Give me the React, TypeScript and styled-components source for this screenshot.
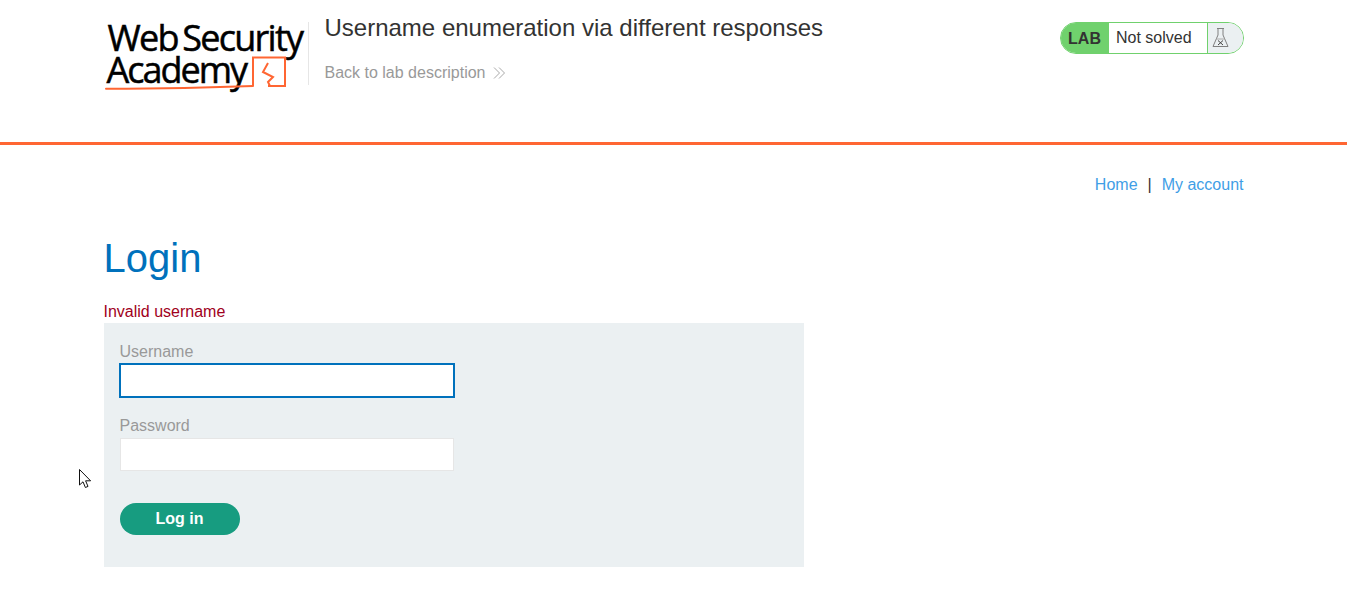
import React from "react";
import styled, { createGlobalStyle } from "styled-components";

const Global = createGlobalStyle`
  html, body { margin: 0; padding: 0; background: #fff; }
  body { font-family: "Liberation Sans", Arial, sans-serif; font-size: 16px; color: #333332; height: 590px; overflow: hidden; position: relative; }
`;

const Header = styled.header`
  height: 142px;
  border-bottom: 3px solid #ff6633;
  box-sizing: content-box;
`;
const Inner = styled.div`
  width: 1140px;
  margin: 0 auto;
`;
const HeaderInner = styled(Inner)`
  display: flex;
  align-items: flex-start;
  padding-top: 22px;
  box-sizing: content-box;
`;
const Logo = styled.div`
  position: relative;
  width: 204px;
  height: 63px;
  flex: none;
  color: #000;
  font-family: "Open Sans", sans-serif;
`;
const LogoLine = styled.div<{ $left: number; $spacing: number }>`
  margin-left: ${(p) => p.$left}px;
  font-size: 36px;
  line-height: 32px;
  letter-spacing: ${(p) => p.$spacing}px;
  word-spacing: -3px;
  white-space: nowrap;
  -webkit-text-stroke: 0.5px #000;
`;
const LogoArt = styled.svg`
  position: absolute;
  left: 0;
  top: 0;
`;
const Divider = styled.div`
  width: 1px;
  height: 63px;
  background: #e6e6e6;
  margin-right: 16px;
  flex: none;
`;
const TitleBlock = styled.div`
  flex: 1;
`;
const Title = styled.h2`
  margin: -1px 0 0;
  font-size: 24px;
  font-weight: 400;
  line-height: 13px;
  color: #333332;
`;
const BackLink = styled.a`
  display: flex;
  align-items: center;
  gap: 8px;
  margin-top: 30px;
  font-size: 16px;
  line-height: 18px;
  color: #999;
`;
const Badge = styled.div`
  display: flex;
  width: 184px;
  height: 32px;
  box-sizing: border-box;
  border: 1px solid #70d16d;
  border-radius: 16px;
  overflow: hidden;
  flex: none;
`;
const BadgeLab = styled.div`
  width: 48px;
  background: #70d16d;
  font-weight: 700;
  font-size: 16px;
  line-height: 31px;
  text-align: center;
  color: #333332;
`;
const BadgeStatus = styled.div`
  flex: 1;
  font-size: 16px;
  line-height: 29px;
  padding-left: 7.5px;
  color: #333332;
`;
const BadgeIcon = styled.div`
  width: 36px;
  background: #ebf0f2;
  border-left: 1px solid #70d16d;
  display: flex;
  align-items: center;
  padding-left: 4px;
  box-sizing: border-box;
`;
const Nav = styled.nav`
  display: flex;
  justify-content: flex-end;
  align-items: center;
  gap: 10px;
  padding-top: 31px;
  line-height: 18px;
`;
const NavLink = styled.a`
  color: #3f9ee6;
  font-size: 16px;
`;
const Sep = styled.span`
  color: #333332;
`;
const Heading = styled.h1`
  margin: 41px 0 0;
  font-size: 40px;
  font-weight: 400;
  line-height: 46px;
  color: #0071bc;
`;
const Error = styled.p`
  margin: 22px 0 2px;
  font-size: 16px;
  line-height: 18px;
  color: #a00020;
`;
const Form = styled.form`
  width: 700px;
  height: 244px;
  box-sizing: border-box;
  background: #ebf0f2;
  padding: 20px 16px 0;
`;
const Label = styled.label`
  display: block;
  font-size: 16px;
  line-height: 18px;
  color: #999;
`;
const Field = styled.input<{ $focus?: boolean }>`
  display: block;
  width: ${(p) => (p.$focus ? 336 : 334)}px;
  height: ${(p) => (p.$focus ? 35 : 33)}px;
  box-sizing: border-box;
  background: #fff;
  border: ${(p) => (p.$focus ? "2px solid #0071bc" : "1px solid #e6e6e6")};
  margin: ${(p) => (p.$focus ? "2px 0 19px -1px" : "3px 0 32px 0")};
  outline: none;
  padding: 0;
`;
const Submit = styled.button`
  display: block;
  width: 120px;
  height: 32px;
  border: 0;
  border-radius: 16px;
  background: #179c80;
  color: #fff;
  font-family: "Liberation Sans", Arial, sans-serif;
  font-weight: 700;
  font-size: 16px;
  padding: 0;
`;
const Cursor = styled.svg`
  position: absolute;
  left: 78px;
  top: 468px;
`;

export default function App() {
  return (
    <>
      <Global />
      <Header>
        <HeaderInner>
          <Logo>
            <LogoLine $left={4} $spacing={-1.75}>Web Security</LogoLine>
            <LogoLine $left={3} $spacing={-2}>Academy</LogoLine>
            <LogoArt width="204" height="72" viewBox="0 0 204 72" fill="none">
              <path d="M2 66.8 C40 66.6 95 66 149 64" stroke="#ff6633" strokeWidth="2" strokeLinecap="round" />
              <path d="M149 64 V35.5 H181 V64 H164" stroke="#ff6633" strokeWidth="2" />
              <path d="M164 41 L159 50 L169 55 L164 60 L166 64" stroke="#ff6633" strokeWidth="2" />
            </LogoArt>
          </Logo>
          <Divider />
          <TitleBlock>
            <Title>Username enumeration via different responses</Title>
            <BackLink>
              Back to lab description
              <svg width="13" height="12" viewBox="0 0 13 12" fill="none" stroke="#a8a8a8" strokeWidth="1">
                <path d="M1 0.5 L6.5 6 L1 11.5" />
                <path d="M6 0.5 L11.5 6 L6 11.5" />
              </svg>
            </BackLink>
          </TitleBlock>
          <Badge>
            <BadgeLab>LAB</BadgeLab>
            <BadgeStatus>Not solved</BadgeStatus>
            <BadgeIcon>
              <svg width="17" height="22" viewBox="0 0 17 22" fill="none" stroke="#808080" strokeWidth="1">
                <path d="M5 1.5 H12 M6 1.5 V8 L1 19.5 H16 L11 8 V1.5" />
                <path d="M4 12 H13" stroke="#aaa" />
                <path d="M6 13.5 L11 18 M11 13.5 L6 18" stroke="#444" />
              </svg>
            </BadgeIcon>
          </Badge>
        </HeaderInner>
      </Header>
      <Inner>
        <Nav>
          <NavLink>Home</NavLink>
          <Sep>|</Sep>
          <NavLink>My account</NavLink>
        </Nav>
        <Heading>Login</Heading>
        <Error>Invalid username</Error>
        <Form onSubmit={(e) => e.preventDefault()}>
          <Label>Username</Label>
          <Field $focus />
          <Label>Password</Label>
          <Field type="password" />
          <Submit type="button">Log in</Submit>
        </Form>
      </Inner>
      <Cursor width="14" height="21" viewBox="0 0 14 21" fill="#fff" stroke="#111" strokeWidth="1">
        <path d="M1.5 1.5 V17 L5 13.8 L7.4 19.5 L10 18.4 L7.6 12.8 L12.6 12.8 Z" />
      </Cursor>
    </>
  );
}
